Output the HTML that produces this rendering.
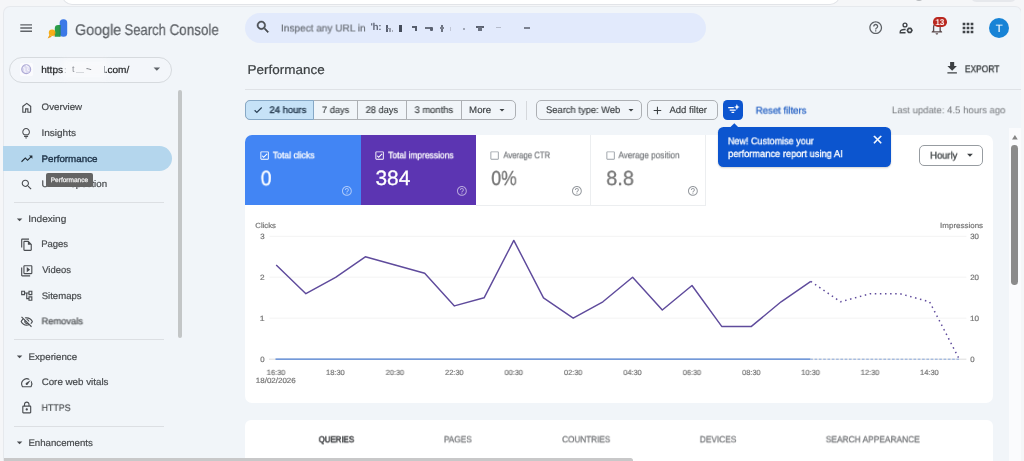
<!DOCTYPE html>
<html>
<head>
<meta charset="utf-8">
<title>Performance</title>
<style>
*{box-sizing:border-box;margin:0;padding:0}
html,body{width:1024px;height:461px;overflow:hidden}
body{font-family:"Liberation Sans",sans-serif;background:#f5f6f8;position:relative;text-rendering:geometricPrecision}
.a{position:absolute}
.t{position:absolute;white-space:nowrap;line-height:1;transform-origin:0 0;will-change:transform}
svg{position:absolute;overflow:visible}
.hr{position:absolute;height:1px;background:#dcdfe3}
.i{fill:#4a4d51}
</style>
</head>
<body>
<!-- browser chrome remnants -->
<div class="a" style="left:63px;top:-14px;width:776px;height:17.5px;background:#fff;border-radius:9px;box-shadow:0 0 0 1px #e2e4e8"></div>
<div class="a" style="left:969.500px;top:-11px;width:47.500px;height:13.200px;background:#e6e8ec;border-radius:7px"></div>
<div class="a" style="left:915px;top:-7px;width:8px;height:8px;background:#b4b7bb;border-radius:4px;filter:blur(.6px)"></div>
<!-- page -->
<div class="a" style="left:3.600px;top:7.200px;width:1017.400px;height:460px;background:#f1f5f9;border-radius:6px 6px 0 0;box-shadow:0 0 0 1px #e6e9ed"></div>

<!-- HEADER -->
<svg style="left:0;top:0" width="1024" height="60" viewBox="0 0 1024 60">
  <path d="M20.3 24.8h11.7M20.3 28h11.7M20.3 31.2h11.7" stroke="#5f6368" stroke-width="1.35" fill="none"/>
  <!-- logo -->
  <rect x="59.700" y="19.200" width="7.500" height="17.600" rx="3.600" fill="#3b78e7"/>
  <path d="M54.800 28.300a3.400 3.400 0 0 1 3.400-3.400h2.200v11.900h-5.600z" fill="#2a9c4a"/>
  <path d="M59.700 24.900h.9v11.900h-.9z" fill="#1d6b4a" opacity=".5"/>
  <circle cx="52.100" cy="32.800" r="3.300" fill="#f6ae17"/>
  <path d="M49.600 34.800l-2 3.600 4.200-1.700z" fill="#ee9f16"/>
  <path d="M54.800 30.600v5.600l-1.300.5z" fill="#c9801c" opacity=".55"/>
</svg>
<div class="a" style="left:245px;top:12.800px;width:461px;height:30.500px;border-radius:15.250px;background:#e2eafc"></div>
<svg style="left:254.900px;top:19.200px" width="16" height="16" viewBox="0 0 24 24"><path fill="#474b50" stroke="#474b50" stroke-width=".700" d="M15.5 14h-.79l-.28-.27C15.410 12.590 16 11.110 16 9.500 16 5.910 13.090 3 9.500 3S3 5.910 3 9.500 5.910 16 9.500 16c1.610 0 3.090-.590 4.230-1.570l.27.280v.790l5 4.990L20.490 19l-4.990-5zm-6 0C7.010 14 5 11.990 5 9.500S7.010 5 9.500 5 14 7.010 14 9.500 11.990 14 9.500 14z"/></svg>
<!-- redacted url smudges -->
<div class="a" style="left:0;top:0;filter:blur(.65px)">
  <div class="t" style="left:370.500px;top:22.800px;font-size:10px;color:#666c7c;font-weight:bold;letter-spacing:-.4px;will-change:auto">'h:</div>
  <div class="a" style="left:385.600px;top:25.300px;width:2px;height:6.300px;background:#596071"></div><div class="a" style="left:387px;top:27.500px;width:3.500px;height:1.800px;background:#8d93a3"></div><div class="a" style="left:389.400px;top:28px;width:1.600px;height:3.600px;background:#979dac"></div><div class="a" style="left:391.500px;top:30.200px;width:1.400px;height:1.400px;background:#a4a9b8"></div>
  <div class="a" style="left:398.800px;top:25.400px;width:3.400px;height:6.200px;background:#454c5b"></div>
  <div class="a" style="left:411.800px;top:25.800px;width:5.300px;height:2.200px;background:#5a6170"></div><div class="a" style="left:414.700px;top:25.800px;width:2.400px;height:5.600px;background:#555c6b"></div>
  <div class="a" style="left:425px;top:26.600px;width:6px;height:2px;background:#6a7180"></div><div class="a" style="left:429.600px;top:27.400px;width:3px;height:4px;background:#5a6170;border-radius:1px"></div>
  <div class="a" style="left:440.600px;top:25.300px;width:2.600px;height:6.300px;background:#6b7280"></div><div class="a" style="left:440px;top:27px;width:4px;height:1.500px;background:#7b8190"></div>
  <div class="a" style="left:449.800px;top:26.500px;width:1.600px;height:4.500px;background:#c0c6d6"></div>
  <div class="a" style="left:462.600px;top:28px;width:2.400px;height:2.400px;background:#8a909f;border-radius:1px"></div>
  <div class="a" style="left:476px;top:26.200px;width:7.500px;height:2px;background:#5a6170"></div><div class="a" style="left:478px;top:27.400px;width:4px;height:3.200px;background:#6a7180"></div>
  <div class="a" style="left:496px;top:26.500px;width:5px;height:1.600px;background:#b5bbcb"></div>
  <div class="a" style="left:523.500px;top:27.200px;width:6.500px;height:2px;background:#7b8190"></div>
</div>
<!-- header right icons -->
<svg style="left:867.8px;top:20px" width="15.4" height="15.4" viewBox="0 0 24 24"><path fill="#5f6368" d="M11 18h2v-2h-2v2zm1-16C6.480 2 2 6.480 2 12s4.480 10 10 10 10-4.480 10-10S17.520 2 12 2zm0 18c-4.410 0-8-3.590-8-8s3.590-8 8-8 8 3.590 8 8-3.590 8-8 8zm0-14c-2.210 0-4 1.790-4 4h2c0-1.100.900-2 2-2s2 .900 2 2c0 2-3 1.750-3 5h2c0-2.250 3-2.500 3-5 0-2.210-1.790-4-4-4z"/></svg>
<svg style="left:898px;top:20px" width="16" height="16" viewBox="0 0 24 24" fill="none" stroke="#3f4347" stroke-width="2"><circle cx="10.500" cy="7.500" r="2.900"/><path d="M11.400 14.200H9.500c-3.600 0-6.200 1.500-6.200 3.700v1.200h8"/><polygon points="21.00,15.50 19.25,18.53 15.75,18.53 14.00,15.50 15.75,12.47 19.25,12.47" stroke-width="2.500" stroke-linejoin="round"/></svg>
<svg style="left:929.4px;top:19.6px" width="15.750" height="15.750" viewBox="0 0 24 24"><path fill="#5a4a4c" d="M12 22c1.100 0 2-.900 2-2h-4c0 1.100.900 2 2 2zm6-6v-5c0-3.070-1.630-5.640-4.500-6.320V4c0-.830-.670-1.500-1.500-1.500s-1.500.670-1.500 1.500v.680C7.640 5.360 6 7.920 6 11v5l-2 2v1h16v-1l-2-2zm-2 1H8v-6c0-2.480 1.510-4.500 4-4.500s4 2.020 4 4.500v6z"/></svg>
<div class="a" style="left:932.8px;top:17px;width:14.600px;height:9.600px;border-radius:4.800px;background:#b9271f"></div>
<svg style="left:960.3px;top:19.9px" width="16" height="16" viewBox="0 0 24 24"><path fill="#3f4347" d="M4 8h4V4H4v4zm6 12h4v-4h-4v4zm-6 0h4v-4H4v4zm0-6h4v-4H4v4zm6 0h4v-4h-4v4zm6-10v4h4V4h-4zm-6 4h4V4h-4v4zm6 6h4v-4h-4v4zm0 6h4v-4h-4v4z"/></svg>
<div class="a" style="left:988.9px;top:17.600px;width:20.200px;height:20.200px;border-radius:50%;background:#1783d6"></div>

<!-- PROPERTY SELECTOR -->
<div class="a" style="left:8.500px;top:57.300px;width:163.400px;height:25.800px;border:1px solid #d6dade;border-radius:13px;background:#f3f6fa"></div>
<div class="a" style="left:62px;top:60px;width:46px;height:19px;background:#f9fafc;filter:blur(2.5px);opacity:.9"></div>
<div class="a" style="left:19.700px;top:62.700px;width:13.200px;height:13.600px;background:#fbfbfe;border-radius:1.500px"></div>
<svg style="left:21.300px;top:64.300px" width="10.400" height="10.400" viewBox="0 0 20 20"><circle cx="10" cy="10" r="8.600" fill="#dcdaf0" stroke="#aeabd6" stroke-width="2.200"/><path d="M4 7c3 0 4 2 3 4s1 4 3 5M10 2c0 3 3 2 4 4s-3 3-1 6l3 1" stroke="#f3f2fb" stroke-width="2.200" fill="none"/></svg>
<div class="a" style="left:0;top:0;filter:blur(.5px)">
  <div class="t" style="left:63.500px;top:65.500px;font-size:9px;color:#b5b9c0">:</div>
  <div class="t" style="left:72px;top:65px;font-size:9px;color:#8a8e95">t</div>
  <div class="a" style="left:76px;top:72px;width:8px;height:1px;background:#d5d8dc"></div>
  <div class="t" style="left:85.500px;top:67px;font-size:6.500px;color:#5f6368;font-style:italic;font-weight:bold;letter-spacing:-.5px">~-</div>
  <div class="a" style="left:103.500px;top:66px;width:1.400px;height:7.400px;background:#a8acb3"></div>
</div>
<svg style="left:148.500px;top:61.300px" width="15.600" height="15.600" viewBox="0 0 24 24"><path fill="#5f6368" d="M7 10l5 5 5-5z"/></svg>

<!-- SIDEBAR -->
<div class="a" style="left:3px;top:146.300px;width:169.300px;height:25px;background:#b4d6ed;border-radius:0 12.500px 12.500px 0"></div>
<div class="hr" style="left:13.800px;top:201.600px;width:150px"></div>
<div class="hr" style="left:13.800px;top:339px;width:150px"></div>
<div class="hr" style="left:13.800px;top:425.500px;width:150px"></div>
<div class="a" style="left:177.500px;top:89.800px;width:4.400px;height:248px;background:#c3c6c7;border-radius:2.200px"></div>
<!-- nav icons: 13.5px box centered x=26.5 -->
<svg style="left:19.750px;top:100.950px" width="13.500" height="13.500" viewBox="0 0 24 24"><path class="i" d="M6 19h3v-6h6v6h3v-9l-6-4.500L6 10v9zm-2 2V9l8-6 8 6v12h-7v-6h-2v6H4z"/></svg>
<svg style="left:19.700px;top:126.950px" width="12.200" height="12.500" viewBox="0 0 24 24" preserveAspectRatio="none"><path class="i" d="M12 22q-.825 0-1.412-.587Q10 20.825 10 20h4q0 .825-.587 1.413Q12.825 22 12 22Zm-4-3v-2h8v2Zm.250-3q-1.725-1.025-2.737-2.750Q4.500 11.525 4.500 9.500q0-3.125 2.188-5.312Q8.875 2 12 2q3.125 0 5.312 2.188Q19.500 6.375 19.500 9.500q0 2.025-1.012 3.750-1.013 1.725-2.738 2.750Zm.600-2h6.300q1.125-.800 1.738-1.975.612-1.175.612-2.525 0-2.300-1.600-3.900T12 4Q9.700 4 8.100 5.600T6.500 9.500q0 1.350.612 2.525Q7.725 13.200 8.850 14Z"/></svg>
<svg style="left:19.750px;top:152.400px" width="13.500" height="13.500" viewBox="0 0 24 24"><path fill="#1f2a33" d="M16 6l2.290 2.290-4.880 4.880-4-4L2 16.590 3.410 18l6-6 4 4 6.300-6.290L22 12V6z"/></svg>
<svg style="left:19.950px;top:177.850px" width="13.500" height="13.500" viewBox="0 0 24 24"><path class="i" d="M15.500 14h-.79l-.28-.27C15.410 12.590 16 11.110 16 9.500 16 5.910 13.090 3 9.500 3S3 5.910 3 9.500 5.910 16 9.500 16c1.610 0 3.090-.590 4.230-1.570l.27.280v.790l5 4.990L20.490 19l-4.990-5zm-6 0C7.010 14 5 11.990 5 9.500S7.010 5 9.500 5 14 7.010 14 9.500 11.990 14 9.500 14z"/></svg>
<svg style="left:13.200px;top:212.500px" width="13.200" height="13.200" viewBox="0 0 24 24"><path class="i" d="M7 10l5 5 5-5z"/></svg>
<svg style="left:19.600px;top:238.100px" width="13.500" height="13.500" viewBox="0 0 24 24"><path class="i" d="M16 1H4c-1.100 0-2 .900-2 2v14h2V3h12V1zm-1 4H8c-1.100 0-1.990.900-1.990 2L6 21c0 1.100.890 2 1.990 2H19c1.100 0 2-.900 2-2V11l-6-6zM8 21V7h6v5h5v9H8z"/></svg>
<svg style="left:19.600px;top:263.700px" width="13.500" height="13.500" viewBox="0 0 24 24"><path class="i" d="M4 6H2v14c0 1.100.900 2 2 2h14v-2H4V6zm16-4H8c-1.100 0-2 .900-2 2v12c0 1.100.900 2 2 2h12c1.100 0 2-.900 2-2V4c0-1.100-.900-2-2-2zm0 14H8V4h12v12zm-8-10.500v9l6-4.500z"/></svg>
<svg style="left:19.600px;top:289.200px" width="13.500" height="13.500" viewBox="0 0 24 24"><path class="i" d="M22 11V3h-7v3H9V3H2v8h7V8h2v10h4v3h7v-8h-7v3h-2V8h2v3h7zM7 9H4V5h3v4zm10 6h3v4h-3v-4zm0-10h3v4h-3V5z"/></svg>
<svg style="left:19.750px;top:314.800px" width="13.500" height="13.500" viewBox="0 0 24 24"><path class="i" d="M12 6c3.790 0 7.170 2.130 8.820 5.500-.590 1.220-1.420 2.270-2.410 3.120l1.410 1.410c1.390-1.230 2.490-2.770 3.180-4.530C21.270 7.110 17 4 12 4c-1.270 0-2.490.200-3.640.570l1.650 1.650C10.660 6.090 11.320 6 12 6zm-1.070 1.140L13 9.210c.570.250 1.030.710 1.280 1.280l2.070 2.070c.080-.340.140-.700.140-1.070C16.500 9.010 14.480 7 12 7c-.370 0-.720.050-1.070.140zM2.010 3.870l2.680 2.680C3.060 7.830 1.770 9.530 1 11.500 2.730 15.890 7 19 12 19c1.520 0 2.980-.290 4.320-.820l3.420 3.420 1.410-1.410L3.420 2.450 2.010 3.870zm7.500 7.500l2.610 2.610c-.040.010-.080.020-.120.020-1.380 0-2.500-1.120-2.500-2.500 0-.050.010-.080.010-.130zm-3.400-3.400l1.750 1.750c-.230.550-.360 1.150-.360 1.780 0 2.480 2.020 4.500 4.500 4.500.630 0 1.230-.130 1.770-.360l.980.980c-.880.240-1.800.380-2.750.380-3.790 0-7.170-2.130-8.820-5.500.700-1.430 1.720-2.610 2.930-3.530z"/></svg>
<svg style="left:13.200px;top:350.100px" width="13.200" height="13.200" viewBox="0 0 24 24"><path class="i" d="M7 10l5 5 5-5z"/></svg>
<svg style="left:19.750px;top:375.600px" width="13.500" height="13.500" viewBox="0 0 24 24"><path class="i" d="M20.380 8.570l-1.230 1.850a8 8 0 0 1-.220 7.580H5.070A8 8 0 0 1 15.580 6.850l1.850-1.230A10 10 0 0 0 3.350 19a2 2 0 0 0 1.720 1h13.850a2 2 0 0 0 1.740-1 10 10 0 0 0-.270-10.440zm-9.790 6.840a2 2 0 0 0 2.830 0l5.660-8.490-8.490 5.660a2 2 0 0 0 0 2.830z"/></svg>
<svg style="left:19.750px;top:400.600px" width="13.500" height="13.500" viewBox="0 0 24 24"><path class="i" d="M18 8h-1V6c0-2.760-2.240-5-5-5S7 3.240 7 6v2H6c-1.100 0-2 .900-2 2v10c0 1.100.900 2 2 2h12c1.100 0 2-.900 2-2V10c0-1.100-.900-2-2-2zM9 6c0-1.660 1.340-3 3-3s3 1.340 3 3v2H9V6zm9 14H6V10h12v10zm-6-3c1.100 0 2-.900 2-2s-.900-2-2-2-2 .900-2 2 .900 2 2 2z"/></svg>
<svg style="left:13.200px;top:436px" width="13.200" height="13.200" viewBox="0 0 24 24"><path class="i" d="M7 10l5 5 5-5z"/></svg>

<!-- TITLE ROW -->
<svg style="left:944px;top:60.200px" width="16.300" height="16.300" viewBox="0 0 24 24"><path fill="#3c4043" d="M19 9h-4V3H9v6H5l7 7 7-7zM5 18v2h14v-2H5z"/></svg>
<div class="hr" style="left:245px;top:89px;width:776px;background:#dfe2e6"></div>

<!-- FILTER BAR -->
<div class="a" style="left:245.300px;top:100.100px;width:270.700px;height:20.100px;border:1px solid #adb0b4;border-radius:5px"></div>
<div class="a" style="left:245.300px;top:100.100px;width:68.700px;height:20.100px;border:1px solid #86a8c6;border-radius:5px 0 0 5px;background:#c6e2f7"></div>
<div class="a" style="left:357.200px;top:101px;width:1px;height:18.500px;background:#adb0b4"></div>
<div class="a" style="left:406px;top:101px;width:1px;height:18.500px;background:#adb0b4"></div>
<div class="a" style="left:460.500px;top:101px;width:1px;height:18.500px;background:#adb0b4"></div>
<svg style="left:253.300px;top:104.800px" width="10.200" height="10.200" viewBox="0 0 24 24"><path fill="#1d3247" stroke="#1d3247" stroke-width=".800" d="M9 16.170L4.830 12l-1.420 1.410L9 19 21 7l-1.410-1.410z"/></svg>
<svg style="left:496px;top:103.750px" width="12" height="12" viewBox="0 0 24 24"><path fill="#3c4043" d="M7 10l5 5 5-5z"/></svg>
<div class="a" style="left:526px;top:100.500px;width:1px;height:19.500px;background:#d5d8dc"></div>
<div class="a" style="left:536px;top:100.100px;width:106px;height:20.100px;border:1px solid #adb0b4;border-radius:5px"></div>
<svg style="left:625.250px;top:103.750px" width="12" height="12" viewBox="0 0 24 24"><path fill="#3c4043" d="M7 10l5 5 5-5z"/></svg>
<div class="a" style="left:646.800px;top:100.100px;width:71px;height:20.100px;border:1px solid #adb0b4;border-radius:5px"></div>
<svg style="left:651px;top:103.600px" width="12.900" height="12.900" viewBox="0 0 24 24"><path fill="#3c4043" d="M19 13h-6v6h-2v-6H5v-2h6V5h2v6h6v2z"/></svg>
<div class="a" style="left:722.800px;top:100px;width:20.400px;height:20px;background:#0c55cf;border-radius:4.500px"></div>
<svg style="left:722.800px;top:100px" width="20.400" height="20" viewBox="0 0 20.400 20"><path d="M5.200 7.700h5.600M6.700 10.100h6M8.500 12.500h2.700" stroke="#fff" stroke-width="1.250" fill="none"/><path d="M13.900 4.100l.85 2.050 2.050.85-2.050.85-.85 2.050-.85-2.050-2.050-.85 2.050-.85z" fill="#fff"/></svg>

<!-- MAIN CARD -->
<div class="a" style="left:245px;top:134.800px;width:748.200px;height:267.800px;background:#fff;border-radius:7px"></div>
<div class="a" style="left:245px;top:134.800px;width:115.600px;height:70.300px;background:#4285f4;border-top-left-radius:7px"></div>
<div class="a" style="left:360.600px;top:134.800px;width:115.500px;height:70.300px;background:#5c35b2"></div>
<div class="a" style="left:590px;top:134.800px;width:1px;height:70.500px;background:#eceef0"></div>
<div class="a" style="left:705px;top:134.800px;width:1px;height:70.500px;background:#eceef0"></div>
<div class="a" style="left:476px;top:204.800px;width:230px;height:1px;background:#eceef0"></div>
<!-- checkboxes -->
<svg style="left:259px;top:149.700px" width="11.200" height="11.200" viewBox="0 0 24 24"><path fill="#fff" d="M19 3H5c-1.100 0-2 .900-2 2v14c0 1.100.900 2 2 2h14c1.100 0 2-.900 2-2V5c0-1.100-.900-2-2-2zm0 16H5V5h14v14zM17.990 9l-1.410-1.420-6.590 6.590-2.580-2.570-1.420 1.410 4 3.990z"/></svg>
<svg style="left:373.800px;top:149.700px" width="11.200" height="11.200" viewBox="0 0 24 24"><path fill="#fff" d="M19 3H5c-1.100 0-2 .900-2 2v14c0 1.100.900 2 2 2h14c1.100 0 2-.900 2-2V5c0-1.100-.900-2-2-2zm0 16H5V5h14v14zM17.990 9l-1.410-1.420-6.590 6.590-2.580-2.570-1.420 1.410 4 3.990z"/></svg>
<svg style="left:489px;top:149.700px" width="11.200" height="11.200" viewBox="0 0 24 24"><path fill="#9aa0a6" d="M19 5v14H5V5h14m0-2H5c-1.100 0-2 .900-2 2v14c0 1.100.900 2 2 2h14c1.100 0 2-.900 2-2V5c0-1.100-.900-2-2-2z"/></svg>
<svg style="left:604.500px;top:149.700px" width="11.200" height="11.200" viewBox="0 0 24 24"><path fill="#9aa0a6" d="M19 5v14H5V5h14m0-2H5c-1.100 0-2 .900-2 2v14c0 1.100.900 2 2 2h14c1.100 0 2-.900 2-2V5c0-1.100-.900-2-2-2z"/></svg>
<!-- help icons -->
<svg style="left:341.100px;top:185.200px" width="11.800" height="11.800" viewBox="0 0 24 24"><path fill="#fff" fill-opacity=".55" d="M11 18h2v-2h-2v2zm1-16C6.480 2 2 6.480 2 12s4.480 10 10 10 10-4.480 10-10S17.520 2 12 2zm0 18c-4.410 0-8-3.590-8-8s3.590-8 8-8 8 3.590 8 8-3.590 8-8 8zm0-14c-2.210 0-4 1.790-4 4h2c0-1.100.900-2 2-2s2 .900 2 2c0 2-3 1.750-3 5h2c0-2.250 3-2.500 3-5 0-2.210-1.790-4-4-4z"/></svg>
<svg style="left:456.200px;top:185.200px" width="11.800" height="11.800" viewBox="0 0 24 24"><path fill="#fff" fill-opacity=".55" d="M11 18h2v-2h-2v2zm1-16C6.480 2 2 6.480 2 12s4.480 10 10 10 10-4.480 10-10S17.520 2 12 2zm0 18c-4.410 0-8-3.590-8-8s3.590-8 8-8 8 3.590 8 8-3.590 8-8 8zm0-14c-2.210 0-4 1.790-4 4h2c0-1.100.900-2 2-2s2 .900 2 2c0 2-3 1.750-3 5h2c0-2.250 3-2.500 3-5 0-2.210-1.790-4-4-4z"/></svg>
<svg style="left:571.400px;top:185.400px" width="11.800" height="11.800" viewBox="0 0 24 24"><path fill="#979ba0" d="M11 18h2v-2h-2v2zm1-16C6.480 2 2 6.480 2 12s4.480 10 10 10 10-4.480 10-10S17.520 2 12 2zm0 18c-4.410 0-8-3.590-8-8s3.590-8 8-8 8 3.590 8 8-3.590 8-8 8zm0-14c-2.210 0-4 1.790-4 4h2c0-1.100.900-2 2-2s2 .900 2 2c0 2-3 1.750-3 5h2c0-2.250 3-2.500 3-5 0-2.210-1.790-4-4-4z"/></svg>
<svg style="left:686.800px;top:185.400px" width="11.800" height="11.800" viewBox="0 0 24 24"><path fill="#979ba0" d="M11 18h2v-2h-2v2zm1-16C6.480 2 2 6.480 2 12s4.480 10 10 10 10-4.480 10-10S17.520 2 12 2zm0 18c-4.410 0-8-3.590-8-8s3.590-8 8-8 8 3.590 8 8-3.590 8-8 8zm0-14c-2.210 0-4 1.790-4 4h2c0-1.100.900-2 2-2s2 .900 2 2c0 2-3 1.750-3 5h2c0-2.250 3-2.500 3-5 0-2.210-1.790-4-4-4z"/></svg>
<!-- hourly -->
<div class="a" style="left:919px;top:145.100px;width:64px;height:20.600px;border:1px solid #979ca1;border-radius:5px;background:#fff"></div>
<svg style="left:963.100px;top:148.400px" width="13.900" height="13.900" viewBox="0 0 24 24"><path fill="#3c4043" d="M7 10l5 5 5-5z"/></svg>

<!-- CHART -->
<svg style="left:0;top:0" width="1024" height="461" viewBox="0 0 1024 461">
  <g stroke="#f3f3f3" stroke-width="1" fill="none">
    <path d="M269.500 236.300H966.400M269.500 277.200H966.400M269.500 318.200H966.400"/>
    <path d="M269 359.200H966.400" stroke="#dcdcdc"/>
  </g>
  <polyline fill="none" stroke="#5f4b9c" stroke-width="1.450" stroke-linejoin="round" points="276.2,265.0 305.9,293.7 335.6,277.3 365.3,256.8 395.0,265.0 424.7,273.2 454.4,305.9 484.1,297.8 513.8,240.4 543.5,297.8 573.2,318.2 602.9,301.8 632.6,277.3 662.3,310.0 692.0,285.5 721.7,326.4 751.4,326.4 781.1,301.8 810.8,281.4"/>
  <polyline fill="none" stroke="#5f4b9c" stroke-width="1.500" stroke-dasharray="1.500 3.600" stroke-linecap="butt" points="810.8,281.4 840.5,301.8 870.2,293.7 899.9,293.7 929.6,301.8 959.3,359.2"/>
  <path d="M275.500 359.200H810.300" stroke="#4c7fd4" stroke-width="1.200"/>
  <path d="M810.300 359.200H959" stroke="#7fa2dc" stroke-width=".900" stroke-dasharray="2.600 1.700"/>
</svg>

<!-- TOOLTIP (AI) -->
<svg style="left:730.400px;top:123.100px" width="8.600" height="4.600" viewBox="0 0 10 5"><path d="M0 5l5-5 5 5z" fill="#0c55cf"/></svg>
<div class="a" style="left:718px;top:127.300px;width:173.200px;height:40.200px;background:#0c55cf;border-radius:5.500px;box-shadow:0 1px 2px rgba(0,0,0,.18)"></div>
<svg style="left:871.300px;top:133.200px" width="13.200" height="13.200" viewBox="0 0 24 24"><path fill="#fff" stroke="#fff" stroke-width="1" d="M19 6.410L17.590 5 12 10.590 6.410 5 5 6.410 10.590 12 5 17.590 6.410 19 12 13.410 17.590 19 19 17.590 13.410 12z"/></svg>

<!-- sidebar hover tooltip -->
<div class="a" style="left:46.100px;top:172.800px;width:46.900px;height:14.200px;background:#646464;border-radius:2px;z-index:4"></div>

<!-- TABS CARD -->
<div class="a" style="left:245px;top:419.800px;width:748.200px;height:60px;background:#fff;border-radius:6px"></div>

<!-- SCROLLBARS / edges -->
<div class="a" style="left:1008.500px;top:128px;width:12px;height:333px;background:#fafbfd"></div>
<svg style="left:1011.700px;top:135.200px" width="5.800" height="4.600" viewBox="0 0 10 8"><path d="M0 8l5-8 5 8z" fill="#858585"/></svg>
<div class="a" style="left:1011.400px;top:144.800px;width:6.800px;height:139.800px;background:#8b8b8b;border-radius:3.400px"></div>
<div class="a" style="left:1021px;top:7px;width:3px;height:460px;background:#f5f6f8"></div>
<div class="a" style="left:3.600px;top:457.600px;width:629.200px;height:4px;background:#c8c8c9;border-radius:0 2.500px 0 0"></div>

<div class="t" style="left:75px;top:23px;font-size:15.4px;color:#5f6368;transform:translate(0.05px,0.00px) scaleX(0.9304);-webkit-text-stroke:.25px #5f6368">Google</div>
<div class="t" style="left:124px;top:23px;font-size:15.4px;color:#5f6368;transform:translate(0.52px,0.00px) scaleX(0.8483);-webkit-text-stroke:.25px #5f6368">Search</div>
<div class="t" style="left:169px;top:23px;font-size:15.4px;color:#5f6368;transform:translate(0.60px,0.00px) scaleX(0.8712);-webkit-text-stroke:.25px #5f6368">Console</div>
<div class="t" style="left:281px;top:24px;font-size:10.2px;color:#6b7078;transform:translate(0.01px,0.50px) scaleX(0.9875);-webkit-text-stroke:.2px #6b7078">Inspect any URL in</div>
<div class="t" style="left:41px;top:66px;font-size:9.8px;color:#222426;transform:translate(0.23px,0.40px) scaleX(1.0274);-webkit-text-stroke:.2px #222426">https</div>
<div class="t" style="left:104px;top:66px;font-size:9.8px;color:#222426;transform:translate(0.73px,0.40px) scaleX(1.0244);-webkit-text-stroke:.2px #222426">.com/</div>
<div class="t" style="left:41px;top:102px;font-size:9.4px;color:#474a4d;transform:translate(0.58px,0.30px) scaleX(1.0377);-webkit-text-stroke:.2px #474a4d">Overview</div>
<div class="t" style="left:41px;top:128px;font-size:9.4px;color:#474a4d;transform:translate(0.39px,0.00px) scaleX(1.0690);-webkit-text-stroke:.2px #474a4d">Insights</div>
<div class="t" style="left:41px;top:153px;font-size:9.4px;color:#1d3247;transform:translate(0.49px,0.60px) scaleX(1.0430);-webkit-text-stroke:.35px #1d3247">Performance</div>
<div class="t" style="left:41px;top:178px;font-size:9.4px;color:#474a4d;transform:translate(0.57px,0.80px) scaleX(1.0358);-webkit-text-stroke:.2px #474a4d">URL inspection</div>
<div class="t" style="left:28px;top:214px;font-size:9.4px;color:#474a4d;transform:translate(0.19px,0.10px) scaleX(1.0759);-webkit-text-stroke:.2px #474a4d">Indexing</div>
<div class="t" style="left:41px;top:239px;font-size:9.4px;color:#474a4d;transform:translate(0.14px,0.35px) scaleX(1.0155);-webkit-text-stroke:.2px #474a4d">Pages</div>
<div class="t" style="left:42px;top:265px;font-size:9.4px;color:#474a4d;transform:translate(0.20px,0.20px) scaleX(1.0081);-webkit-text-stroke:.2px #474a4d">Videos</div>
<div class="t" style="left:41px;top:290px;font-size:9.4px;color:#474a4d;transform:translate(0.69px,0.90px) scaleX(1.0212);-webkit-text-stroke:.2px #474a4d">Sitemaps</div>
<div class="t" style="left:41px;top:316px;font-size:9.4px;color:#474a4d;transform:translate(0.55px,0.30px) scaleX(0.9941);-webkit-text-stroke:.2px #474a4d">Removals</div>
<div class="t" style="left:28px;top:352px;font-size:9.4px;color:#474a4d;transform:translate(0.42px,0.00px) scaleX(1.0392);-webkit-text-stroke:.2px #474a4d">Experience</div>
<div class="t" style="left:41px;top:377px;font-size:9.4px;color:#474a4d;transform:translate(0.63px,0.30px) scaleX(1.0424);-webkit-text-stroke:.2px #474a4d">Core web vitals</div>
<div class="t" style="left:41px;top:402px;font-size:9.4px;color:#474a4d;transform:translate(0.59px,0.90px) scaleX(0.9412);-webkit-text-stroke:.2px #474a4d">HTTPS</div>
<div class="t" style="left:28px;top:438px;font-size:9.4px;color:#474a4d;transform:translate(0.43px,0.00px) scaleX(1.0299);-webkit-text-stroke:.2px #474a4d">Enhancements</div>
<div class="t" style="left:247px;top:63px;font-size:12.9px;color:#3c4043;transform:translate(0.55px,0.80px) scaleX(1.0454);-webkit-text-stroke:.2px #3c4043">Performance</div>
<div class="t" style="left:964px;top:65px;font-size:9.8px;color:#3c4043;transform:translate(0.89px,0.20px) scaleX(0.8625);-webkit-text-stroke:.35px #3c4043">EXPORT</div>
<div class="t" style="left:269px;top:106px;font-size:9.5px;color:#1d3247;transform:translate(0.50px,0.00px) scaleX(0.9967);-webkit-text-stroke:.3px #1d3247">24 hours</div>
<div class="t" style="left:321px;top:106px;font-size:9.5px;color:#3c4043;transform:translate(0.94px,0.00px) scaleX(0.9747);-webkit-text-stroke:.15px #3c4043">7 days</div>
<div class="t" style="left:365px;top:106px;font-size:9.5px;color:#3c4043;transform:translate(0.64px,0.00px) scaleX(0.9732);-webkit-text-stroke:.15px #3c4043">28 days</div>
<div class="t" style="left:414px;top:106px;font-size:9.5px;color:#3c4043;transform:translate(0.53px,0.00px) scaleX(0.9902);-webkit-text-stroke:.15px #3c4043">3 months</div>
<div class="t" style="left:469px;top:106px;font-size:9.5px;color:#3c4043;transform:translate(0.11px,0.00px) scaleX(1.0165);-webkit-text-stroke:.15px #3c4043">More</div>
<div class="t" style="left:545px;top:106px;font-size:9.5px;color:#3c4043;transform:translate(0.98px,0.00px) scaleX(0.9865);-webkit-text-stroke:.15px #3c4043">Search type: Web</div>
<div class="t" style="left:669px;top:106px;font-size:9.5px;color:#3c4043;transform:translate(0.38px,0.00px) scaleX(1.0047);-webkit-text-stroke:.15px #3c4043">Add filter</div>
<div class="t" style="left:755px;top:106px;font-size:9.8px;color:#2561c4;transform:translate(0.74px,0.60px) scaleX(0.9815);-webkit-text-stroke:.25px #2561c4">Reset filters</div>
<div class="t" style="left:891px;top:106px;font-size:9.7px;color:#74777b;transform:translate(0.86px,0.30px) scaleX(0.9863)">Last update: 4.5 hours ago</div>
<div class="t" style="left:727px;top:137px;font-size:9.8px;color:#fff;transform:translate(0.91px,0.30px) scaleX(0.9218);-webkit-text-stroke:.3px #fff">New! Customise your</div>
<div class="t" style="left:728px;top:150px;font-size:9.8px;color:#fff;transform:translate(0.08px,0.00px) scaleX(0.9475);-webkit-text-stroke:.3px #fff">performance report using AI</div>
<div class="t" style="left:50px;top:177px;font-size:6.5px;color:#f2f2f2;transform:translate(0.72px,0.80px) scaleX(1.0056);-webkit-text-stroke:.25px #f2f2f2;z-index:5">Performance</div>
<div class="t" style="left:272px;top:150px;font-size:9.4px;color:#fff;transform:translate(0.77px,0.30px) scaleX(0.9211);-webkit-text-stroke:.3px #fff">Total clicks</div>
<div class="t" style="left:260px;top:169px;font-size:20.8px;color:#fff;transform:translate(0.74px,0.30px) scaleX(0.9327);-webkit-text-stroke:.3px #fff">0</div>
<div class="t" style="left:388px;top:150px;font-size:9.4px;color:#fff;transform:translate(0.07px,0.30px) scaleX(0.9055);-webkit-text-stroke:.3px #fff">Total impressions</div>
<div class="t" style="left:375px;top:169px;font-size:20.8px;color:#fff;transform:translate(0.50px,0.30px) scaleX(1.0019);-webkit-text-stroke:.3px #fff">384</div>
<div class="t" style="left:503px;top:150px;font-size:9.4px;color:#73767a;transform:translate(0.40px,0.30px) scaleX(0.8265);-webkit-text-stroke:.2px #73767a">Average CTR</div>
<div class="t" style="left:491px;top:169px;font-size:20.4px;color:#757575;transform:translate(0.30px,0.10px) scaleX(0.8640);-webkit-text-stroke:.3px #757575">0%</div>
<div class="t" style="left:618px;top:150px;font-size:9.4px;color:#73767a;transform:translate(0.40px,0.30px) scaleX(0.8777);-webkit-text-stroke:.2px #73767a">Average position</div>
<div class="t" style="left:606px;top:169px;font-size:20.4px;color:#757575;transform:translate(0.23px,0.10px) scaleX(0.9779);-webkit-text-stroke:.3px #757575">8.8</div>
<div class="t" style="left:930px;top:151px;font-size:9.9px;color:#3c4043;transform:translate(0.19px,0.60px) scaleX(0.9530);-webkit-text-stroke:.3px #3c4043">Hourly</div>
<div class="t" style="left:255px;top:221px;font-size:7.5px;color:#757575;transform:translate(0.34px,0.70px) scaleX(1.0310);-webkit-text-stroke:.2px #757575">Clicks</div>
<div class="t" style="left:940px;top:221px;font-size:7.5px;color:#757575;transform:translate(0.11px,0.70px) scaleX(1.0625);-webkit-text-stroke:.2px #757575">Impressions</div>
<div class="t" style="left:260px;top:233px;font-size:7.6px;color:#757575;transform:translate(0.14px,0.10px) scaleX(1.0411);-webkit-text-stroke:.2px #757575">3</div>
<div class="t" style="left:260px;top:273px;font-size:7.6px;color:#757575;transform:translate(0.02px,0.90px) scaleX(1.0857);-webkit-text-stroke:.2px #757575">2</div>
<div class="t" style="left:259px;top:314px;font-size:7.6px;color:#757575;transform:translate(0.78px,0.90px) scaleX(1.1343);-webkit-text-stroke:.2px #757575">1</div>
<div class="t" style="left:260px;top:356px;font-size:7.6px;color:#757575;transform:translate(0.14px,0.00px) scaleX(1.0270);-webkit-text-stroke:.2px #757575">0</div>
<div class="t" style="left:970px;top:233px;font-size:7.6px;color:#757575;transform:translate(0.24px,0.10px) scaleX(1.0345);-webkit-text-stroke:.2px #757575">30</div>
<div class="t" style="left:970px;top:273px;font-size:7.6px;color:#757575;transform:translate(0.13px,0.90px) scaleX(1.0477);-webkit-text-stroke:.2px #757575">20</div>
<div class="t" style="left:969px;top:314px;font-size:7.6px;color:#757575;transform:translate(0.91px,0.90px) scaleX(1.0752);-webkit-text-stroke:.2px #757575">10</div>
<div class="t" style="left:970px;top:355px;font-size:7.6px;color:#757575;transform:translate(0.24px,0.90px) scaleX(1.0270);-webkit-text-stroke:.2px #757575">0</div>
<div class="t" style="left:266px;top:369px;font-size:7.5px;color:#757575;transform:translate(0.65px,0.00px) scaleX(0.9974);-webkit-text-stroke:.2px #757575">16:30</div>
<div class="t" style="left:326px;top:369px;font-size:7.5px;color:#757575;transform:translate(0.05px,0.00px) scaleX(0.9974);-webkit-text-stroke:.2px #757575">18:30</div>
<div class="t" style="left:385px;top:369px;font-size:7.5px;color:#757575;transform:translate(0.65px,0.00px) scaleX(0.9864);-webkit-text-stroke:.2px #757575">20:30</div>
<div class="t" style="left:445px;top:369px;font-size:7.5px;color:#757575;transform:translate(0.05px,0.00px) scaleX(0.9864);-webkit-text-stroke:.2px #757575">22:30</div>
<div class="t" style="left:504px;top:369px;font-size:7.5px;color:#757575;transform:translate(0.55px,0.00px) scaleX(0.9810);-webkit-text-stroke:.2px #757575">00:30</div>
<div class="t" style="left:563px;top:369px;font-size:7.5px;color:#757575;transform:translate(0.95px,0.00px) scaleX(0.9810);-webkit-text-stroke:.2px #757575">02:30</div>
<div class="t" style="left:623px;top:369px;font-size:7.5px;color:#757575;transform:translate(0.35px,0.00px) scaleX(0.9810);-webkit-text-stroke:.2px #757575">04:30</div>
<div class="t" style="left:682px;top:369px;font-size:7.5px;color:#757575;transform:translate(0.75px,0.00px) scaleX(0.9810);-webkit-text-stroke:.2px #757575">06:30</div>
<div class="t" style="left:742px;top:369px;font-size:7.5px;color:#757575;transform:translate(0.15px,0.00px) scaleX(0.9810);-webkit-text-stroke:.2px #757575">08:30</div>
<div class="t" style="left:801px;top:369px;font-size:7.5px;color:#757575;transform:translate(0.25px,0.00px) scaleX(0.9974);-webkit-text-stroke:.2px #757575">10:30</div>
<div class="t" style="left:860px;top:369px;font-size:7.5px;color:#757575;transform:translate(0.65px,0.00px) scaleX(0.9974);-webkit-text-stroke:.2px #757575">12:30</div>
<div class="t" style="left:920px;top:369px;font-size:7.5px;color:#757575;transform:translate(0.05px,0.00px) scaleX(0.9974);-webkit-text-stroke:.2px #757575">14:30</div>
<div class="t" style="left:255px;top:377px;font-size:7.5px;color:#757575;transform:translate(0.81px,0.30px) scaleX(1.0637);-webkit-text-stroke:.2px #757575">18/02/2026</div>
<div class="t" style="left:318px;top:435px;font-size:8.8px;color:#333538;transform:translate(0.67px,0.35px) scaleX(0.8947);-webkit-text-stroke:.45px #333538">QUERIES</div>
<div class="t" style="left:443px;top:435px;font-size:9px;color:#77797c;transform:translate(0.91px,0.35px) scaleX(0.9199);-webkit-text-stroke:.3px #77797c">PAGES</div>
<div class="t" style="left:562px;top:435px;font-size:9px;color:#77797c;transform:translate(0.14px,0.35px) scaleX(0.9070);-webkit-text-stroke:.3px #77797c">COUNTRIES</div>
<div class="t" style="left:699px;top:435px;font-size:9px;color:#77797c;transform:translate(0.80px,0.35px) scaleX(0.9243);-webkit-text-stroke:.3px #77797c">DEVICES</div>
<div class="t" style="left:825px;top:435px;font-size:9px;color:#77797c;transform:translate(0.78px,0.35px) scaleX(0.9308);-webkit-text-stroke:.3px #77797c">SEARCH APPEARANCE</div>
<div class="t" style="left:935px;top:18px;font-size:8.4px;color:#fff;transform:translate(0.54px,0.00px) scaleX(0.9216);font-weight:bold">13</div>
<div class="t" style="left:995px;top:23px;font-size:10.6px;color:#fff;transform:translate(0.48px,0.50px) scaleX(1.1240)">T</div>
</body>
</html>
